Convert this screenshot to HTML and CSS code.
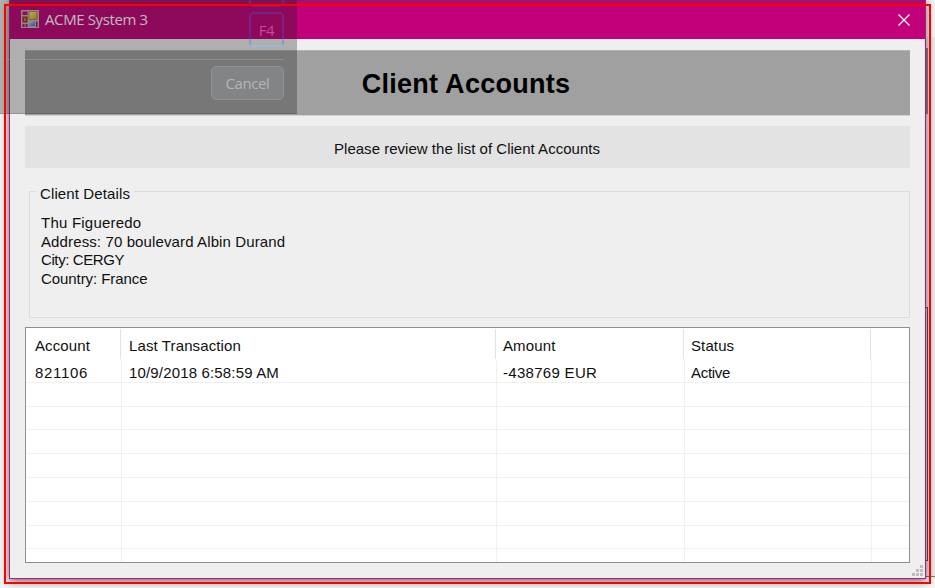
FILE: index.html
```html
<!DOCTYPE html>
<html lang="en">
<head>
<meta charset="utf-8">
<title>ACME System 3</title>
<link rel="stylesheet" href="styles.css">
</head>
<body>
<div class="desktop">
  <div class="behind-top"></div>
  <div class="behind-pane"></div>
  <div class="behind-list"></div>
  <main class="window">
    <header class="titlebar">
      <svg class="app-icon" width="18" height="18" viewBox="0 0 18 18">
        <defs>
          <linearGradient id="gold" x2="1" y2="1"><stop stop-color="#fff0a0"/><stop offset="1" stop-color="#d09a10"/></linearGradient>
          <linearGradient id="blue" x2="1" y2="1"><stop stop-color="#b8dcff"/><stop offset="1" stop-color="#2b66c8"/></linearGradient>
        </defs>
        <path fill="#c4b3b3" d="M0 0h18v18H0z"/>
        <path fill="#c00078" d="M1.500 1.500h5v3.500h-5zM1.500 14h2v3h-2zM4.500 14h2v3h-2zM15 11.500h1.500V17H15z"/>
        <path fill="#a02822" d="M1.500 6.500h5v6h-5z"/><path fill="#d27464" d="M3 8h2v3H3z"/>
        <path fill="url(#gold)" stroke="#b48a22" d="M8 1.500h8v8H8z"/>
        <path fill="url(#blue)" d="M8 11.500h6V16H8z"/>
      </svg>
      <h1 class="title">ACME System 3</h1>
      <svg class="close" width="12" height="12" viewBox="0 0 12 12"><path d="M.5.500l11 11M11.500.500l-11 11" stroke="#fff" stroke-width="1.300"/></svg>
    </header>
    <div class="content">
      <div class="banner"><h2 class="heading">Client Accounts</h2></div>
      <p class="notice"><span>Please review the list of Client Accounts</span></p>
      <section class="group">
        <h3 class="legend">Client Details</h3>
        <p class="client-name">Thu Figueredo</p>
        <p class="address">Address: 70 boulevard Albin Durand</p>
        <p class="city">City: CERGY</p>
        <p class="country">Country: France</p>
      </section>
      <section class="list">
        <div class="row head"><span>Account</span><span>Last Transaction</span><span>Amount</span><span>Status</span><span></span></div>
        <div class="row first"><span class="account">821106</span><span class="date">10/9/2018 6:58:59 AM</span><span class="amount">-438769 EUR</span><span class="status">Active</span><span></span></div>
        <div class="row"><span></span><span></span><span></span><span></span><span></span></div>
        <div class="row"><span></span><span></span><span></span><span></span><span></span></div>
        <div class="row"><span></span><span></span><span></span><span></span><span></span></div>
        <div class="row"><span></span><span></span><span></span><span></span><span></span></div>
        <div class="row"><span></span><span></span><span></span><span></span><span></span></div>
        <div class="row"><span></span><span></span><span></span><span></span><span></span></div>
        <div class="row"><span></span><span></span><span></span><span></span><span></span></div>
        <div class="row last"><span></span><span></span><span></span><span></span><span></span></div>
      </section>
    </div>
    <svg class="grip" width="11" height="11" viewBox="0 0 11 11"><path fill="#bdbdbd" d="M8 0h3v3H8zM4 4h3v3H4zM8 4h3v3H8zM0 8h3v3H0zM4 8h3v3H4zM8 8h3v3H8z"/></svg>
  </main>
  <aside class="ghost">
    <div class="key key-cut"></div>
    <div class="key key-f4">F4</div>
    <div class="rule"></div>
    <div class="cancel">Cancel</div>
  </aside>
  <div class="highlight"></div>
</div>
</body>
</html>
```

FILE: styles.css
```css
* { box-sizing: border-box; }
body { margin: 0; }
h1, h2, h3, p { margin: 0; font-weight: normal; }
.desktop {
  position: relative;
  width: 935px;
  height: 588px;
  overflow: hidden;
  background: #f4f4f4;
  font: 15px/19px "Liberation Sans", Arial, sans-serif;
  color: #101010;
}
.behind-top { position: absolute; left: 926px; top: 37px; width: 9px; height: 540px; background: #e9e9e9; border-bottom: 1px solid #777; }
.behind-pane { position: absolute; left: 926px; top: 48px; width: 2px; height: 66px; background: #888; }
.behind-list { position: absolute; left: 926px; top: 307px; width: 2px; height: 254px; border: 1px solid #555; border-left: 0; }
.window {
  position: absolute;
  left: 9px;
  top: 0;
  width: 917px;
  height: 579px;
  background: #efefef;
  border: 1px solid #c2147f;
  border-top: 0;
  box-shadow: 0 2px 9px rgba(0, 0, 0, .6);
}
.titlebar {
  display: flex;
  align-items: center;
  height: 39px;
  padding: 0 15px 0 11px;
  background: linear-gradient(#a01168 0, #b50a71 3px, #c10079 5px);
}
.app-icon { margin-right: 6px; margin-top: -1px; }
.title {
  flex: 1;
  margin-top: -2px;
  font: 15px/20px "Open Sans", "Noto Sans", sans-serif;
  letter-spacing: -.38px;
  color: #fff;
}
.close { margin-top: 1px; }
.content { padding: 11px 15px 0; }
.banner {
  display: flex;
  align-items: center;
  justify-content: center;
  height: 66px;
  padding-top: 2px;
  background: #a0a0a0;
  border-top: 1px solid #b3b3b3;
  border-bottom: 1px solid #d0d0d0;
}
.heading { margin-left: -3px; font-size: 27px; line-height: 32px; font-weight: bold; letter-spacing: .28px; color: #000; }
.notice {
  display: flex;
  align-items: center;
  justify-content: center;
  height: 42px;
  margin-top: 10px;
  padding: 3px 1px 0 0;
  background: #e3e3e3;
  letter-spacing: .02px;
}
.group {
  height: 127px;
  margin: 23px 0 9px 4px;
  padding: 0 0 0 11px;
  border: 1px solid #dcdcdc;
}
.legend {
  width: max-content;
  margin: -8px 0 10px -5px;
  padding: 0 4px;
  background: #efefef;
  font-size: 15px;
  letter-spacing: .12px;
}
.client-name { letter-spacing: .22px; }
.address { letter-spacing: .12px; }
.city { letter-spacing: -.4px; line-height: 18px; }
.country { letter-spacing: -.07px; }
.list {
  height: 236px;
  padding: 1px 0 0 1px;
  overflow: hidden;
  background: #fff;
  border: 1px solid #8b8f97;
}
.row {
  display: grid;
  grid-template-columns: 95px 375px 188px 187px 1fr;
  height: 23.800px;
  border-bottom: 1px solid #f0f0f0;
}
.row span { padding-left: 8px; border-right: 1px solid #f0f0f0; }
.row span:last-child { border-right: 0; }
.row span + span { padding-left: 7px; }
.row span + span + span { padding-left: 6px; }
.head { height: 30px; border-bottom: 0; grid-template-columns: 94px 375px 188px 187px 1fr; letter-spacing: .12px; }
.head span { padding-top: 7px; border-color: #e3e3e3; }
.head span + span { padding-left: 8px; }
.head span + span + span { padding-left: 7px; }
.first { line-height: 27px; }
.account { letter-spacing: .7px; }
.date { letter-spacing: .16px; }
.amount { letter-spacing: .3px; }
.status { letter-spacing: -.3px; }
.last { border-bottom: 0; }
.grip { position: absolute; right: 2px; bottom: 2px; }
.ghost {
  position: absolute;
  left: 0;
  top: 0;
  width: 297px;
  height: 114px;
  background: rgba(28, 28, 28, .3);
  border-bottom: 1px solid rgba(0, 0, 0, .15);
  font: 15px/20px "Open Sans", "Noto Sans", sans-serif;
}
.key { width: 35px; margin-left: 249px; border: 2px solid rgba(70, 100, 220, .3); border-radius: 5px; }
.key-cut { height: 7px; border-top: 0; border-radius: 0 0 5px 5px; }
.key-f4 {
  height: 35px;
  margin-top: 5px;
  padding-top: 6px;
  text-align: center;
  letter-spacing: -.4px;
  color: #c9489b;
  border-bottom-color: #9bb9d1;
}
.rule { width: 284px; height: 1px; margin-top: 12px; background: rgba(180, 180, 180, .35); }
.cancel {
  width: 73px;
  height: 34px;
  margin: 6px 0 0 211px;
  padding-top: 6px;
  text-align: center;
  letter-spacing: -.4px;
  color: #b5b5b5;
  background: #828486;
  border: 1px solid #8f9193;
  border-radius: 5px;
}
.highlight { position: absolute; left: 4px; top: 4px; width: 927px; height: 580px; border: 2px solid #f00; }
```
